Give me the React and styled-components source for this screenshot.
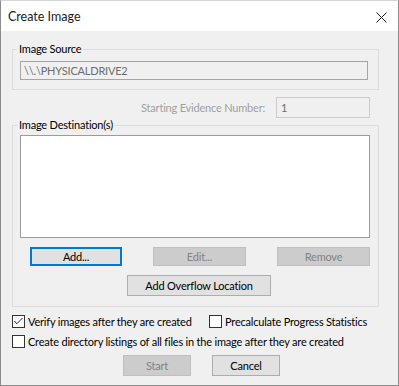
import React from "react";
import styled, { createGlobalStyle } from "styled-components";

const Global = createGlobalStyle`
  html, body {
    margin: 0;
    padding: 0;
    background: #ffffff;
  }
  * {
    box-sizing: border-box;
  }
`;

function App() {
  const [verify, setVerify] = React.useState(true);
  const [precalc, setPrecalc] = React.useState(false);
  const [listing, setListing] = React.useState(false);

  return (
    <>
      <Global />
      <Dialog>
        <TitleBar>
          <Title>Create Image</Title>
          <CloseBtn>
            <svg width="11" height="11" viewBox="0 0 11 11">
              <path d="M0.5 0.5 L10.5 10.5 M10.5 0.5 L0.5 10.5" stroke="#1a1a1a" strokeWidth="1" fill="none" />
            </svg>
          </CloseBtn>
        </TitleBar>
        <Body>
          <Group $top={18} $pad="11px 10px 9px 7px">
            <Legend>Image Source</Legend>
            <SourceBox>\\.\PHYSICALDRIVE2</SourceBox>
          </Group>

          <EvidenceRow>
            <DimLabel>Starting Evidence Number:</DimLabel>
            <EvidenceBox>1</EvidenceBox>
          </EvidenceRow>

          <Group $top={7} $pad="9px 8px 10px 7px">
            <Legend>Image Destination(s)</Legend>
            <ListBox />
            <ButtonRow>
              <Button $w={92} $focus>Add...</Button>
              <Button $w={93} disabled>Edit...</Button>
              <Button $w={93} disabled>Remove</Button>
            </ButtonRow>
            <OverflowRow>
              <Button $w={144} $h={21}>Add Overflow Location</Button>
            </OverflowRow>
          </Group>

          <CheckRow $top={8}>
            <Check w={197} checked={verify} onToggle={() => setVerify(!verify)}>
              Verify images after they are created
            </Check>
            <Check checked={precalc} onToggle={() => setPrecalc(!precalc)}>
              Precalculate Progress Statistics
            </Check>
          </CheckRow>
          <CheckRow $top={7}>
            <Check checked={listing} onToggle={() => setListing(!listing)}>
              Create directory listings of all files in the image after they are created
            </Check>
          </CheckRow>

          <Footer>
            <Button $w={68} $h={21} disabled>Start</Button>
            <Button $w={68} $h={21}>Cancel</Button>
          </Footer>
        </Body>
      </Dialog>
    </>
  );
}

function Check({ checked, onToggle, children, w }) {
  return (
    <CheckLabel $w={w} onClick={onToggle}>
      <Box>
        {checked && (
          <svg width="11" height="11" viewBox="0 0 11 11">
            <path d="M1.5 5 L3.8 7.8 L9.5 2" stroke="#333" strokeWidth="1" fill="none" />
          </svg>
        )}
      </Box>
      <span>{children}</span>
    </CheckLabel>
  );
}

const Dialog = styled.div`
  width: 399px;
  height: 386px;
  border: 1px solid #8c8c8c;
  border-top: 1px solid #d6d6d6;
  background: #f0f0f0;
  display: flex;
  flex-direction: column;
  font-family: Lato, "Noto Sans", sans-serif;
  font-size: 11px;
  letter-spacing: -0.2px;
  color: #000;
`;

const TitleBar = styled.div`
  height: 30px;
  background: #ffffff;
  display: flex;
  align-items: center;
  justify-content: space-between;
  padding: 0 11px 0 7px;
  flex-shrink: 0;
`;

const Title = styled.div`
  font-size: 12.5px;
  letter-spacing: 0;
  color: #1a1a1a;
  margin-top: 1px;
`;

const CloseBtn = styled.div`
  display: flex;
  align-items: center;
  margin-top: 2px;
`;

const Body = styled.div`
  display: flex;
  flex-direction: column;
  padding-left: 11px;
`;

const Group = styled.div`
  position: relative;
  width: 367px;
  margin-top: ${(p) => p.$top}px;
  border: 1px solid #dcdcdc;
  padding: ${(p) => p.$pad};
  display: flex;
  flex-direction: column;
`;

const Legend = styled.span`
  position: absolute;
  top: -8px;
  left: 4px;
  padding: 0 2px;
  background: #f0f0f0;
  line-height: 14px;
  color: #000;
`;

const SourceBox = styled.div`
  width: 348px;
  height: 19px;
  border: 1px solid #a5a5a5;
  background: #f0f0f0;
  color: #6d6d6d;
  padding-left: 3px;
  line-height: 17px;
`;

const EvidenceRow = styled.div`
  display: flex;
  align-items: center;
  margin-top: 7px;
  height: 21px;
`;

const DimLabel = styled.div`
  width: 253px;
  text-align: right;
  color: #a0a0a0;
`;

const EvidenceBox = styled.div`
  margin-left: 11px;
  width: 94px;
  height: 21px;
  border: 1px solid #cccccc;
  background: #f0f0f0;
  color: #6d6d6d;
  padding-left: 4px;
  line-height: 19px;
`;

const ListBox = styled.div`
  width: 350px;
  height: 103px;
  background: #ffffff;
  border: 1px solid #9b9b9b;
`;

const ButtonRow = styled.div`
  display: flex;
  gap: 31px;
  margin-top: 9px;
  padding-left: 10px;
`;

const OverflowRow = styled.div`
  display: flex;
  margin-top: 9px;
  padding-left: 107px;
`;

const Button = styled.button`
  width: ${(p) => p.$w}px;
  height: ${(p) => p.$h || 19}px;
  padding: 0;
  font-family: inherit;
  font-size: 11px;
  letter-spacing: -0.2px;
  color: #000;
  background: #e1e1e1;
  border: 1px solid ${(p) => (p.$focus ? "#0078d7" : "#adadad")};
  box-shadow: ${(p) => (p.$focus ? "inset 0 0 0 1px #0078d7" : "none")};
  &:disabled {
    background: #cccccc;
    border-color: #bfbfbf;
    color: #838383;
  }
`;

const CheckRow = styled.div`
  display: flex;
  margin-top: ${(p) => p.$top}px;
  height: 13px;
  align-items: center;
`;

const CheckLabel = styled.label`
  display: flex;
  align-items: center;
  gap: 3px;
  width: ${(p) => (p.$w ? `${p.$w}px` : "auto")};
  flex-shrink: 0;
  cursor: default;
  white-space: nowrap;
`;

const Box = styled.span`
  width: 13px;
  height: 13px;
  border: 1px solid #333333;
  background: #ffffff;
  display: flex;
  align-items: center;
  justify-content: center;
  flex-shrink: 0;
`;

const Footer = styled.div`
  display: flex;
  gap: 21px;
  margin-top: 7px;
  padding-left: 111px;
`;

export default App;
